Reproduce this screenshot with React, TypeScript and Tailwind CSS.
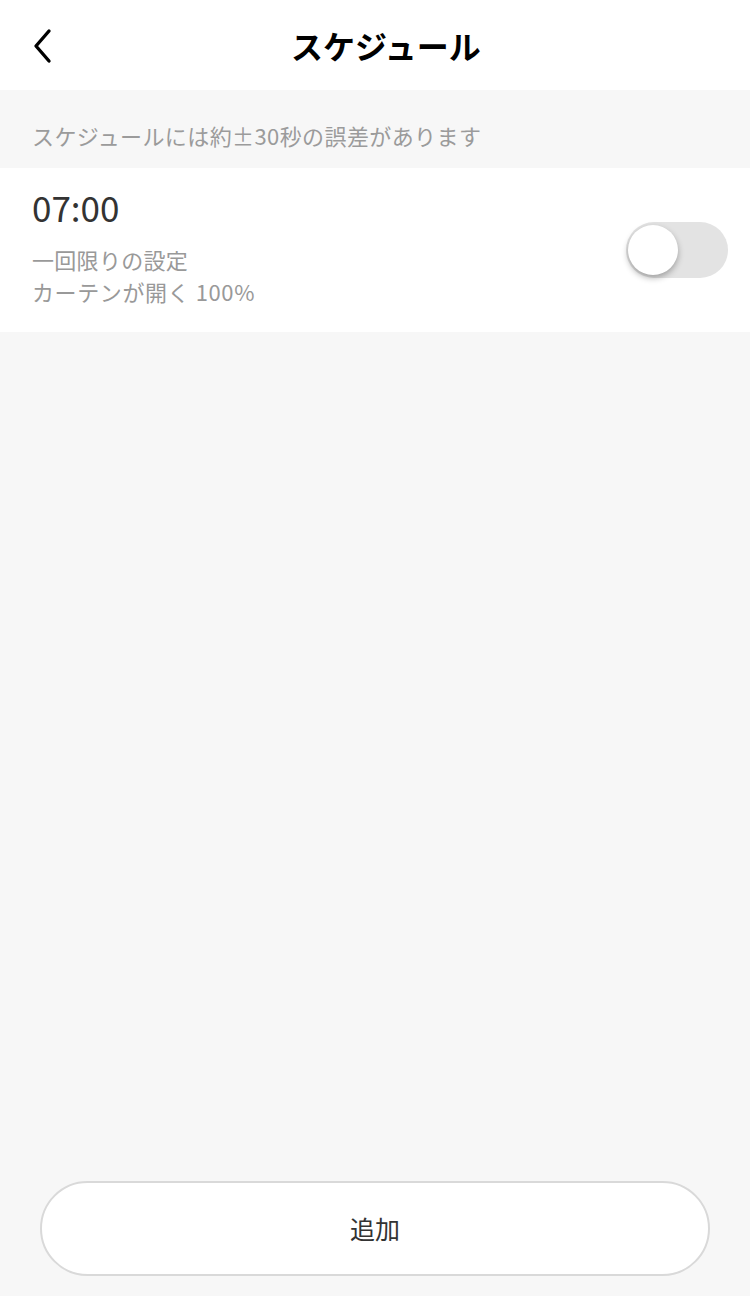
export default function App() {
  return (
    <div
      className="flex flex-col w-[750px] h-[1296px] bg-[#f7f7f7]"
      style={{ fontFamily: '"Noto Sans CJK JP", "Noto Sans", sans-serif' }}
    >
      <header className="relative h-[90px] bg-white flex items-center justify-center">
        <button className="absolute left-[26px] top-[26px] w-[34px] h-[40px] flex items-center justify-center" aria-label="back">
          <svg width="24" height="36" viewBox="0 0 24 36" fill="none">
            <path d="M18 3 L5 18 L18 33" stroke="#000" strokeWidth="3.4" strokeLinecap="round" strokeLinejoin="round" />
          </svg>
        </button>
        <h1 className="ml-[22px] text-[32px] font-bold text-black leading-none">スケジュール</h1>
      </header>

      <div className="h-[78px] flex items-center px-[32px] pt-[12px]">
        <p className="text-[22px] text-[#9b9b9b] leading-none tracking-[0.4px]">スケジュールには約±30秒の誤差があります</p>
      </div>

      <div className="h-[164px] bg-white flex items-center justify-between pl-[32px] pr-[22px]">
        <div className="flex flex-col">
          <span className="text-[35px] text-[#333] leading-none mt-[-10px]">07:00</span>
          <span className="text-[22px] text-[#999] leading-none mt-[24px] tracking-[0.3px]">一回限りの設定</span>
          <span className="text-[22px] text-[#999] leading-none mt-[10px] tracking-[0.6px]">カーテンが開く 100%</span>
        </div>
        <div className="relative w-[102px] h-[56px] rounded-full bg-[#e3e3e3]">
          <div className="absolute left-[2px] top-[3px] w-[50px] h-[50px] rounded-full bg-white shadow-[0_3px_6px_rgba(0,0,0,0.3)]" />
        </div>
      </div>

      <div className="flex-1" />

      <div className="px-[40px] pb-[20px]">
        <button className="w-full h-[95px] rounded-full bg-white border-2 border-[#d9d9d9] flex items-center justify-center">
          <span className="text-[25px] text-[#333] leading-none">追加</span>
        </button>
      </div>
    </div>
  );
}
